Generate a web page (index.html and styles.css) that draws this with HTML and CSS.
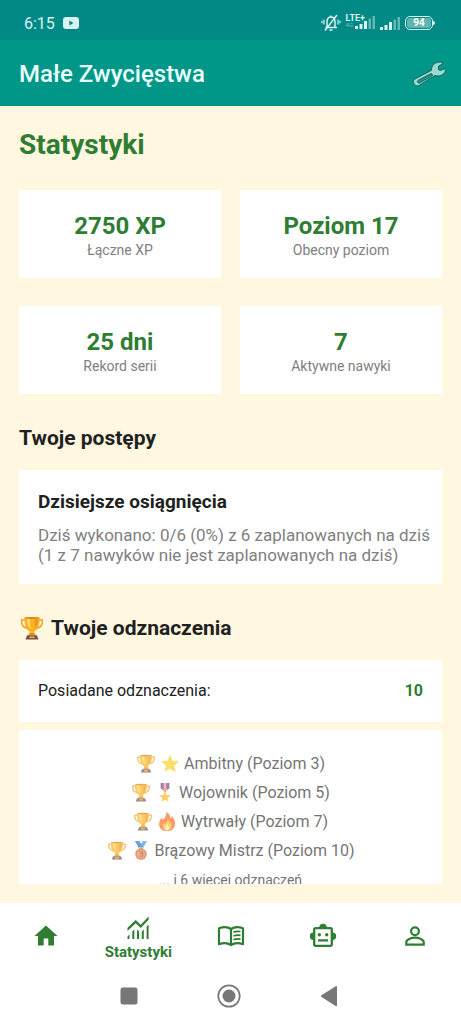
FILE: index.html
```html
<!DOCTYPE html>
<html lang="pl">
<head>
<meta charset="utf-8">
<meta name="viewport" content="width=device-width, initial-scale=1">
<title>Małe Zwycięstwa</title>
<link rel="stylesheet" href="styles.css">
</head>
<body>
<svg class="defs" aria-hidden="true">
  <symbol id="trophy" viewBox="0 0 24 24">
    <path d="M5 4H1.600c-.5 4.600 1.400 7.400 5.400 8.200M19 4h3.400c.5 4.600-1.400 7.400-5.400 8.200" fill="none" stroke="#f0a01e" stroke-width="1.500"/>
    <path d="M4.500 1.500h15c.4 7-1.300 12.500-5.200 13.700l.5 4h-5.600l.5-4C5.800 14 4.100 8.500 4.500 1.500z" fill="#fbb323"/>
    <path d="M7 3h3c-.2 4 .1 7.500 1 10C8.300 11.500 7 8 7 3z" fill="#ffdc6a"/>
    <path d="M14.500 3H18c0 4.500-1 8-3.500 10 .5-3 .6-6 0-10z" fill="#ee971a"/>
    <ellipse cx="12" cy="1.900" rx="7.700" ry="1" fill="#d98613"/>
    <path d="M9.500 17h5l1 2.500h-7z" fill="#e39416"/>
    <path d="M7 19.300h10l1.500 4.200h-13z" fill="#77534a"/>
    <path d="M9.500 20.500h5v1.500h-5z" fill="#e9b94a"/>
  </symbol>
</svg>
<div class="screen">
  <header class="top">
    <div class="status">
      <div class="status-group">
        <span class="clock">6:15</span>
        <svg class="yt" viewBox="0 0 16 12" aria-hidden="true"><rect width="16" height="12" rx="3" fill="#d9f3f2"/><path d="M6.300 3.500v5l4.200-2.500z" fill="#008985"/></svg>
      </div>
      <div class="status-group status-icons">
        <svg class="bell" viewBox="0 0 20 18" fill="none" stroke="#d9f3f2" stroke-width="1.500" aria-hidden="true">
          <path d="M4.500 13.500h11.500M6 13V8c0-3 1.500-5 4-5s4 2 4 5v5M10 3V1.500M8.500 16h3M16 1 4 16.500"/>
          <path d="M3 5.500v5M1 6.800v2.500M17 5.500v5M19 6.800v2.500" stroke-width="1.200"/>
        </svg>
        <span class="network"><span class="lte">LTE+</span><span class="network-row"><span class="volte">4G</span>
        <svg class="bars" viewBox="0 0 20 13" fill="#d9f3f2" aria-hidden="true"><path d="M0 10h3v3H0zM4.500 8h3v5h-3zM9 5h3v8H9z"/><path d="M13.500 2.500h2.500V13h-2.500zM17.500 0H20v13h-2.500z" opacity=".45"/></svg></span></span>
        <svg class="bars" viewBox="0 0 20 13" fill="#d9f3f2" aria-hidden="true"><path d="M0 10h3v3H0zM4.500 8h3v5h-3zM9 5h3v8H9z"/><path d="M13.500 2.500h2.500V13h-2.500zM17.500 0H20v13h-2.500z" opacity=".45"/></svg>
        <span class="battery"><span class="battery-body"><span class="battery-level">94</span></span></span>
      </div>
    </div>
    <div class="appbar">
      <h1 class="app-title">Małe Zwycięstwa</h1>
      <button class="tool" type="button" aria-label="Ustawienia">
        <svg viewBox="0 0 34 26" aria-hidden="true">
          <path d="M2 18.500 19.500 9.300C19 4.800 23 .8 28.700 1l2.300 1.500-4.500 2.700-.1 3.300 2 1L33.200 7.500l.3 2.200c-2 5-6.500 6-10.500 4.800L6.500 24.700C2.500 26 .3 21 2 18.500z" fill="#9ed8d1" stroke="#12655f" stroke-width="1" stroke-linejoin="round"/>
          <path d="m5.900 19.500 12.600-6.700c1.700-.6 2.700 1.200 1.300 2.200l-12 6.800c-1.900.8-3.200-1.300-1.900-2.300z" fill="#149c8d" stroke="#12655f" stroke-width="1"/>
        </svg>
      </button>
    </div>
  </header>

  <main class="content">
    <h2 class="page-title">Statystyki</h2>
    <section class="stats">
      <article class="stat"><strong class="value">2750 XP</strong><span class="label">Łączne XP</span></article>
      <article class="stat"><strong class="value">Poziom 17</strong><span class="label">Obecny poziom</span></article>
      <article class="stat"><strong class="value">25 dni</strong><span class="label">Rekord serii</span></article>
      <article class="stat"><strong class="value">7</strong><span class="label">Aktywne nawyki</span></article>
    </section>

    <h2 class="section-title">Twoje postępy</h2>
    <section class="card progress">
      <h3 class="card-title">Dzisiejsze osiągnięcia</h3>
      <p class="card-text">Dziś wykonano: 0/6 (0%) z 6 zaplanowanych na dziś<br>(1 z 7 nawyków nie jest zaplanowanych na dziś)</p>
    </section>

    <h2 class="section-title"><svg class="title-icon" aria-hidden="true"><use href="#trophy"/></svg>Twoje odznaczenia</h2>
    <section class="card owned"><span>Posiadane odznaczenia:</span><strong class="count">10</strong></section>
    <section class="card badges">
      <ul class="badge-list">
        <li class="badge"><svg class="emoji" aria-hidden="true"><use href="#trophy"/></svg><svg class="emoji" viewBox="0 0 24 24" aria-hidden="true"><path d="m12 1 3.300 7.400 8 .9-6 5.400 1.700 8L12 18.600l-7 4.100 1.700-8-6-5.400 8-.9z" fill="#fdd22f"/><path d="m12 1 1.500 10 9.800-1.700-6 5.400 1.700 8L12 18.600z" fill="#fcc51c" opacity=".4"/></svg>Ambitny (Poziom 3)</li>
        <li class="badge"><svg class="emoji" aria-hidden="true"><use href="#trophy"/></svg><svg class="emoji" viewBox="0 0 24 24" aria-hidden="true"><path d="M6.500 0h11v7L12 10 6.500 7z" fill="#44598f"/><path d="M9 0h6v8.400L12 10 9 8.400z" fill="#e14768"/><path d="M11 0h2v9h-2z" fill="#fff" opacity=".55"/><path d="M10.500 9.500h3v2h-3z" fill="#dc9b27"/><path d="m12 10.500 2 4.600 5.300.4-4 3.300 1.200 5-4.500-2.600-4.500 2.600 1.200-5-4-3.300 5.300-.4z" fill="#fbb82a"/></svg>Wojownik (Poziom 5)</li>
        <li class="badge"><svg class="emoji" aria-hidden="true"><use href="#trophy"/></svg><svg class="emoji" viewBox="0 0 24 24" aria-hidden="true"><path d="M11 0c5 2.500 5 6 5.500 8.500 1-.8 1.500-2 1.500-3.500 3.500 3.500 4.500 7 4 11-.6 5-4.600 8-10 8S2.500 21 2 16c-.3-4 1.800-6.500 3-9 .8 1 1.300 2 1.500 3C9 8 11.800 5 11 0z" fill="#f9702b"/><path d="M12.500 8c.3 3 4.800 4.500 5 9 .2 4-2.500 6.500-5.500 6.500S6.500 21.500 6.500 18c0-2 .8-3.500 1.800-4.700.4 1 .8 1.500 1.400 1.900C11.700 13.500 13 11 12.500 8z" fill="#fdbf2f"/><path d="M12.300 15c.5 1.800 2.500 3 2.300 5.300-.1 1.700-1.200 2.700-2.600 2.700s-2.700-1-2.700-2.700c0-2 2.200-3 3-5.300z" fill="#fff1a5"/></svg>Wytrwały (Poziom 7)</li>
        <li class="badge"><svg class="emoji" aria-hidden="true"><use href="#trophy"/></svg><svg class="emoji" viewBox="0 0 24 24" aria-hidden="true"><path d="M4.500 0h5L12 3.500 14.500 0h5l-5 9h-5z" fill="#4a9bec"/><path d="M4.500 0h5l4.500 7-1 2H9.500z" fill="#2778cf"/><path d="M9.500 7.500h5v2.500h-5z" fill="#d6a63d"/><circle cx="12" cy="16.500" r="7.300" fill="#cf6d3c"/><circle cx="12" cy="16.500" r="5.500" fill="#ec8c55"/><path d="M9.800 13h3.700c2 0 2 3 .2 3.400 2.200.4 2 3.600-.4 3.600H9.700v-1.500h3c1 0 1-1.400 0-1.400h-2v-1.400h1.700c1 0 1-1.200 0-1.200H9.800z" fill="#b55a30"/></svg>Brązowy Mistrz (Poziom 10)</li>
      </ul>
      <p class="more">... i 6 więcej odznaczeń</p>
    </section>
  </main>

  <nav class="tabs" aria-label="Główna nawigacja">
    <a class="tab" href="#start" aria-label="Start"><svg viewBox="0 0 28 28" fill="#2e7d32" aria-hidden="true"><path d="M11.700 23.500V16.500h4.600v7h5.700v-9.400h3.500L14 3.500 2.500 14.100H6v9.400z"/></svg></a>
    <a class="tab tab-active" href="#statystyki" aria-current="page"><svg viewBox="0 0 28 28" fill="#2e7d32" aria-hidden="true"><path d="m3.500 22.500 2-2V25h-2zM8.300 17.500l2-2V25h-2zM13 15.500l2 2V25h-2zM17.800 17.500l2-2V25h-2zM22.600 12.500l2-2V25h-2zM3.500 17v-3.200l8.200-7.800 5 4.700 7.900-8.200v3.200l-7.900 8.300-5-4.800z"/></svg><span>Statystyki</span></a>
    <a class="tab" href="#dziennik" aria-label="Dziennik"><svg viewBox="0 0 28 28" fill="none" stroke="#2e7d32" stroke-width="2.200" stroke-linejoin="round" aria-hidden="true"><path d="M14 7c-3-2.200-8-2.300-12-.8v16c4-1.500 9-1.300 12 .8 3-2.100 8-2.300 12-.8v-16C22 4.700 17 4.800 14 7zM14 7v16"/><path d="M16.500 10.200c2-.9 4.300-1.100 7-.7M16.500 14c2-.9 4.300-1.100 7-.7M16.500 17.800c2-.9 4.300-1.100 7-.7" stroke-width="1.700"/></svg></a>
    <a class="tab" href="#asystent" aria-label="Asystent"><svg viewBox="0 0 28 28" aria-hidden="true"><rect x="5.200" y="6.200" width="17.600" height="17.600" rx="1.500" fill="none" stroke="#2e7d32" stroke-width="2.300"/><path d="M10.300 5.500a3.700 3.700 0 0 1 7.400 0zM4.500 10.500a3.700 3.700 0 0 0 0 7.400zM23.500 10.500a3.700 3.700 0 0 1 0 7.400zM9 17.200h10v2.400H9z" fill="#2e7d32"/><circle cx="10.300" cy="12.800" r="1.700" fill="#2e7d32"/><circle cx="17.700" cy="12.800" r="1.700" fill="#2e7d32"/></svg></a>
    <a class="tab" href="#profil" aria-label="Profil"><svg viewBox="0 0 28 28" fill="none" stroke="#2e7d32" stroke-width="2.200" aria-hidden="true"><circle cx="14" cy="9.300" r="3.900"/><path d="M5.300 22.700v-2.500c0-3 5.800-4.500 8.700-4.500s8.700 1.500 8.700 4.500v2.500z"/></svg></a>
  </nav>
  <div class="system">
    <button class="sys" type="button" aria-label="Ostatnie"><svg viewBox="0 0 24 24" aria-hidden="true"><rect x="3.500" y="3.500" width="17" height="17" rx="2.500" fill="#777"/></svg></button>
    <button class="sys" type="button" aria-label="Ekran główny"><svg viewBox="0 0 24 24" aria-hidden="true"><circle cx="12" cy="12" r="10.700" fill="none" stroke="#777" stroke-width="1.700"/><circle cx="12" cy="12" r="6.500" fill="#777"/></svg></button>
    <button class="sys" type="button" aria-label="Wstecz"><svg viewBox="0 0 24 24" aria-hidden="true"><path d="M20 3v18.500a1 1 0 0 1-1.300.6L4.500 13a1 1 0 0 1 0-1.700l14.200-9A.9.900 0 0 1 20 3z" fill="#777"/></svg></button>
  </div>
</div>
</body>
</html>
```
FILE: styles.css
```css
* { box-sizing: border-box; }
body { margin: 0; font-family: Roboto, "Noto Sans", sans-serif; color: #212121; }
h1, h2, h3, p, ul { margin: 0; padding: 0; }
button { border: 0; padding: 0; background: none; cursor: pointer; }
svg { display: block; flex: none; }
.defs { position: absolute; width: 0; height: 0; }

.screen { display: flex; flex-direction: column; height: 100vh; background: #fff7df; }

.top { background: #009688; }
.status { display: flex; align-items: center; justify-content: space-between; height: 40px; padding: 6px 26px 0 24px; background: #008985; color: #d9f3f2; }
.status-group { display: flex; align-items: center; gap: 8px; }
.clock { font-size: 16px; }
.yt { width: 16px; height: 12px; }
.status-icons { gap: 5px; }
.bell { width: 20px; height: 18px; }
.network { display: flex; flex-direction: column; margin-top: -4px; }
.lte { font-size: 9px; line-height: 8px; font-weight: 700; }
.network-row { display: flex; align-items: flex-end; gap: 2px; height: 7px; }
.volte { font-size: 6px; line-height: 8px; opacity: .5; }
.bars { width: 20px; height: 13px; }
.battery { display: flex; align-items: center; }
.battery::after { content: ""; width: 2px; height: 4px; border-radius: 0 2px 2px 0; background: #d9f3f2; }
.battery-body { display: flex; width: 28px; height: 14px; padding: 1px; border: 1px solid #d9f3f2; border-radius: 5px; }
.battery-level { flex: 1; border-radius: 3px; background: #5fb5b1; color: #fff; font-size: 10px; line-height: 10px; font-weight: 700; text-align: center; }
.appbar { display: flex; align-items: center; justify-content: space-between; height: 66px; padding: 2px 15px 0 19px; }
.app-title { font-size: 24px; line-height: 28px; font-weight: 500; color: #e9fffb; }
.tool svg { width: 34px; height: 26px; }

.content { flex: 1; min-height: 0; display: flex; flex-direction: column; padding: 21px 19px 19px; }
.page-title { font-size: 28px; line-height: 36px; color: #2e7d32; }
.stats { display: grid; grid-template-columns: 1fr 1fr; gap: 28px 19px; margin-top: 27px; }
.stat { display: flex; flex-direction: column; align-items: center; height: 88px; padding-top: 21px; background: #fff; }
.value { font-size: 24px; line-height: 30px; color: #2e7d32; }
.label { font-size: 14px; line-height: 18px; color: #808080; }
.section-title { display: flex; align-items: center; gap: 6px; margin: 29px 0 17px; font-size: 21px; line-height: 30px; }
.title-icon { width: 26px; height: 24px; }
.card { background: #fff; padding: 19px; }
.progress { padding-right: 8px; }
.card-title { font-size: 19px; line-height: 26px; }
.card-text { margin-top: 10px; font-size: 17px; line-height: 20px; color: #808080; }
.owned { display: flex; justify-content: space-between; font-size: 16px; line-height: 24px; }
.count { color: #2e7d32; }
.badges { flex: 1; min-height: 0; margin-top: 8px; overflow: hidden; color: #757575; text-align: center; }
.badge-list { list-style: none; }
.badge { display: flex; align-items: center; justify-content: center; gap: 4px; font-size: 16px; line-height: 29px; }
.emoji { width: 20px; height: 19px; opacity: .7; }
.more { margin-top: 5px; font-size: 14px; line-height: 20px; }

.tabs { display: flex; height: 70px; background: #fff; }
.tab { flex: 1; display: flex; flex-direction: column; align-items: center; padding-top: 19px; color: #2e7d32; font-size: 15px; line-height: 20px; font-weight: 700; text-decoration: none; }
.tab-active { padding-top: 11px; }
.tab svg { width: 28px; height: 28px; }
.system { display: flex; justify-content: center; gap: 76px; height: 51px; padding: 11px 4px 0 0; background: #fff; }
.sys { height: 24px; }
.sys svg { width: 24px; height: 24px; }
```
